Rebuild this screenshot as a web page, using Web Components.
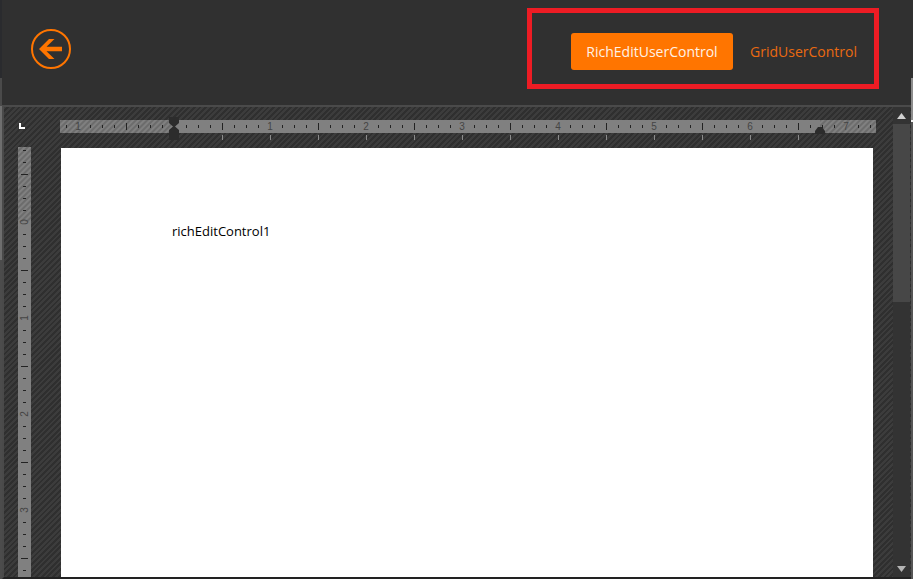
<!DOCTYPE html>
<html>
<head>
<meta charset="utf-8">
<title>RichEditUserControl</title>
<style>
  html, body { margin: 0; padding: 0; background: #303030; overflow: hidden; }
  body { font-family: "Open Sans", "Noto Sans", "Liberation Sans", sans-serif; }
</style>
</head>
<body>
<app-shell>
  <top-bar slot="header">
    <back-button slot="back"></back-button>
    <nav-tab active>RichEditUserControl</nav-tab>
    <nav-tab>GridUserControl</nav-tab>
  </top-bar>
  <rich-editor slot="content">richEditControl1</rich-editor>
</app-shell>

<script>
'use strict';

const SVG_NS = 'http://www.w3.org/2000/svg';

function svgEl(name, attrs, text) {
  let el = document.createElementNS(SVG_NS, name);
  for (let key in attrs) {
    el.setAttribute(key, attrs[key]);
  }
  if (text !== undefined) {
    el.textContent = text;
  }
  return el;
}

function hatchPattern(id, light, dark) {
  let pattern = svgEl('pattern', {
    id: id, width: 4, height: 4, patternUnits: 'userSpaceOnUse', patternTransform: 'rotate(45)'
  });
  pattern.appendChild(svgEl('rect', {width: 2, height: 4, fill: light}));
  pattern.appendChild(svgEl('rect', {x: 2, width: 2, height: 4, fill: dark}));
  return pattern;
}

class AppShell extends HTMLElement {
  constructor() {
    super();
    let shadowRoot = this.attachShadow({mode: 'open'});
    shadowRoot.innerHTML = `<style>
        :host {
          display: flex;
          width: 913px;
          height: 579px;
          background: #303030;
          overflow: hidden;
        }
        .edge-left {
          width: 2px;
          background: linear-gradient(#2a2b2e 0, #2a2b2e 78px, #4a4a4a 78px, #4a4a4a 106px, #6e6e6e 106px, #6e6e6e 260px, #4c4c4c 260px);
        }
        .edge-right {
          width: 2px;
          background: linear-gradient(#303030 0, #303030 78px, #8c8c8c 78px, #8c8c8c 120px, #f4f4f4 120px, #f4f4f4 122px, #555 122px);
        }
        main {
          flex: 1;
          min-width: 0;
          display: flex;
          flex-direction: column;
        }
      </style>
      <div class="edge-left"></div>
      <main>
        <slot name="header"></slot>
        <slot name="content"></slot>
      </main>
      <div class="edge-right"></div>`;
  }
}
customElements.define('app-shell', AppShell);

class TopBar extends HTMLElement {
  constructor() {
    super();
    let shadowRoot = this.attachShadow({mode: 'open'});
    shadowRoot.innerHTML = `<style>
        :host {
          display: flex;
          justify-content: space-between;
          align-items: flex-start;
          height: 105px;
          box-sizing: border-box;
          padding: 8px 32px 0 29px;
          background: #303030;
        }
        .back {
          padding-top: 21px;
        }
        .tabs {
          box-sizing: border-box;
          width: 352px;
          height: 81px;
          border: 5px solid #ed1c24;
          display: flex;
          align-items: flex-start;
          gap: 2px;
          padding: 20px 0 0 39px;
        }
      </style>
      <div class="back"><slot name="back"></slot></div>
      <div class="tabs"><slot></slot></div>`;
  }
}
customElements.define('top-bar', TopBar);

class BackButton extends HTMLElement {
  constructor() {
    super();
    let shadowRoot = this.attachShadow({mode: 'open'});
    shadowRoot.innerHTML = `<style>
        :host {
          display: block;
          width: 40px;
          height: 40px;
          cursor: pointer;
        }
        svg { display: block; }
      </style>
      <svg width="40" height="40" viewBox="0 0 40 40">
        <circle cx="20" cy="20" r="19" fill="none" stroke="#ff7500" stroke-width="2"/>
        <path fill="#ff7500" d="M8 20 L18 10 L23.5 10 L15.5 17.8 L31 17.8 L31 22.2 L15.5 22.2 L23.5 30 L18 30 Z"/>
      </svg>`;
  }
}
customElements.define('back-button', BackButton);

class NavTab extends HTMLElement {
  constructor() {
    super();
    let shadowRoot = this.attachShadow({mode: 'open'});
    shadowRoot.innerHTML = `<style>
        :host {
          display: flex;
          align-items: center;
          justify-content: center;
          box-sizing: border-box;
          height: 37px;
          padding: 0 15px;
          border-radius: 3px;
          font-family: "Open Sans", "Noto Sans", "Liberation Sans", sans-serif;
          font-size: 14px;
          color: #ea6a10;
          white-space: nowrap;
          cursor: pointer;
        }
        :host([active]) {
          min-width: 162px;
          background: #ff7500;
          color: #fff2e6;
        }
      </style><slot></slot>`;
  }
}
customElements.define('nav-tab', NavTab);

class HorizontalRuler extends HTMLElement {
  constructor() {
    super();
    let shadowRoot = this.attachShadow({mode: 'open'});
    shadowRoot.innerHTML = `<style>
        :host {
          display: block;
          width: 816px;
          height: 41px;
        }
        svg { display: block; overflow: visible; }
        text { font: 10px "Liberation Sans", sans-serif; fill: #444; }
      </style>`;
    // x = 0 here is 60 on the page, y = 0 is 107
    let svg = svgEl('svg', {width: 816, height: 41});
    let defs = svgEl('defs', {});
    defs.appendChild(hatchPattern('hatch', '#808080', '#6c6c6c'));
    svg.appendChild(defs);
    svg.appendChild(svgEl('rect', {x: 0, y: 13, width: 816, height: 13, fill: '#808080'}));
    svg.appendChild(svgEl('rect', {x: 0, y: 13, width: 112, height: 13, fill: 'url(#hatch)'}));
    svg.appendChild(svgEl('rect', {x: 760, y: 13, width: 56, height: 13, fill: 'url(#hatch)'}));

    for (let x = 6; x < 816; x += 12) {
      let fromOrigin = x - 114;
      if (fromOrigin === 0) continue;
      let steps = Math.round(fromOrigin / 12);
      if (steps % 8 === 0) {
        svg.appendChild(svgEl('text', {x: x, y: 23, 'text-anchor': 'middle'}, Math.abs(steps / 8)));
      } else if (steps % 4 === 0) {
        svg.appendChild(svgEl('rect', {x: x, y: 16, width: 1, height: 7, fill: '#222'}));
      } else {
        svg.appendChild(svgEl('rect', {x: x, y: 18, width: 1, height: 3, fill: '#222'}));
      }
    }
    // little marks below the ruler
    for (let x = 162; x < 760; x += 48) {
      svg.appendChild(svgEl('rect', {x: x, y: 28, width: 1, height: 5, fill: '#8c8c8c'}));
    }
    // indent sliders
    svg.appendChild(svgEl('path', {fill: '#2c2c2c', d: 'M109 10 H119 V16 L115 19.5 L119 23 V33 H109 V23 L113 19.5 L109 16 Z'}));
    svg.appendChild(svgEl('path', {fill: '#2c2c2c', d: 'M755 27 V24 L758 20 H762 L765 24 V27 Z'}));
    shadowRoot.appendChild(svg);
  }
}
customElements.define('horizontal-ruler', HorizontalRuler);

class VerticalRuler extends HTMLElement {
  constructor() {
    super();
    let shadowRoot = this.attachShadow({mode: 'open'});
    shadowRoot.innerHTML = `<style>
        :host {
          display: block;
          width: 13px;
          height: 100%;
          overflow: hidden;
        }
        svg { display: block; }
        text { font: 10px "Liberation Sans", sans-serif; fill: #444; }
      </style>`;
    // y = 0 here is 147 on the page
    let svg = svgEl('svg', {width: 13, height: 431});
    let defs = svgEl('defs', {});
    defs.appendChild(hatchPattern('hatch', '#808080', '#6c6c6c'));
    svg.appendChild(defs);
    svg.appendChild(svgEl('rect', {width: 13, height: 431, fill: '#808080'}));
    svg.appendChild(svgEl('rect', {width: 13, height: 75, fill: 'url(#hatch)'}));

    for (let y = 3; y < 431; y += 12) {
      let steps = Math.round((y - 75) / 12);
      if (steps % 8 === 0) {
        svg.appendChild(svgEl('text', {
          x: 6.5, y: y + 3, 'text-anchor': 'middle', transform: `rotate(-90 6.5 ${y})`
        }, Math.abs(steps / 8)));
      } else if (steps % 4 === 0) {
        svg.appendChild(svgEl('rect', {x: 3, y: y, width: 7, height: 1, fill: '#222'}));
      } else {
        svg.appendChild(svgEl('rect', {x: 5, y: y, width: 3, height: 1, fill: '#222'}));
      }
    }
    shadowRoot.appendChild(svg);
  }
}
customElements.define('vertical-ruler', VerticalRuler);

class EditorScrollbar extends HTMLElement {
  constructor() {
    super();
    let shadowRoot = this.attachShadow({mode: 'open'});
    shadowRoot.innerHTML = `<style>
        :host {
          display: flex;
          flex-direction: column;
          width: 17px;
          height: 100%;
          background: #333;
        }
        .btn {
          height: 17px;
          display: flex;
          align-items: center;
          justify-content: center;
          flex: none;
        }
        .thumb {
          height: 178px;
          background: #474747;
          flex: none;
        }
        .track { flex: 1; }
      </style>
      <div class="btn"><svg width="9" height="6"><path d="M4.5 0 L9 6 H0 Z" fill="#d0d0d0"/></svg></div>
      <div class="thumb"></div>
      <div class="track"></div>
      <div class="btn"><svg width="9" height="6"><path d="M0 0 H9 L4.5 6 Z" fill="#b4b4b4"/></svg></div>`;
  }
}
customElements.define('editor-scrollbar', EditorScrollbar);

class RichEditor extends HTMLElement {
  constructor() {
    super();
    let shadowRoot = this.attachShadow({mode: 'open'});
    shadowRoot.innerHTML = `<style>
        :host {
          display: block;
          flex: 1;
          min-height: 0;
        }
        .frame {
          box-sizing: border-box;
          height: 474px;
          border-top: 2px solid #4a4a4a;
          border-left: 2px solid #4a4a4a;
          border-bottom: 2px solid #222;
          background: repeating-linear-gradient(135deg, #3c3c3c 0, #3c3c3c 2px, #2f2f2f 2px, #2f2f2f 4px);
          display: grid;
          grid-template-columns: 56px 816px 17px 17px 1px;
          grid-template-rows: 41px 429px;
        }
        .corner {
          grid-column: 1;
          grid-row: 1;
          padding: 16px 0 0 15px;
        }
        .corner span {
          display: block;
          width: 2px;
          height: 4px;
          border-left: 2px solid #fff;
          border-bottom: 2px solid #fff;
          padding-right: 2px;
        }
        horizontal-ruler {
          grid-column: 2;
          grid-row: 1;
        }
        .left {
          grid-column: 1;
          grid-row: 2;
          padding-left: 14px;
          min-height: 0;
        }
        .left vertical-ruler {
          margin-top: -1px;
          height: calc(100% + 1px);
        }
        .page {
          grid-column: 2;
          grid-row: 2;
          background: #fff;
          margin: 0 3px 0 1px;
          padding: 74px 0 0 111px;
          font-family: "Open Sans", "Noto Sans", "Liberation Sans", sans-serif;
          font-size: 13px;
          color: #000;
          overflow: hidden;
        }
        .bar {
          grid-column: 4;
          grid-row: 1 / 3;
          min-height: 0;
        }
      </style>
      <div class="frame">
        <div class="corner"><span></span></div>
        <horizontal-ruler></horizontal-ruler>
        <div class="bar"><editor-scrollbar></editor-scrollbar></div>
        <div class="left"><vertical-ruler></vertical-ruler></div>
        <div class="page"><slot></slot></div>
      </div>`;
  }
}
customElements.define('rich-editor', RichEditor);
</script>
</body>
</html>
